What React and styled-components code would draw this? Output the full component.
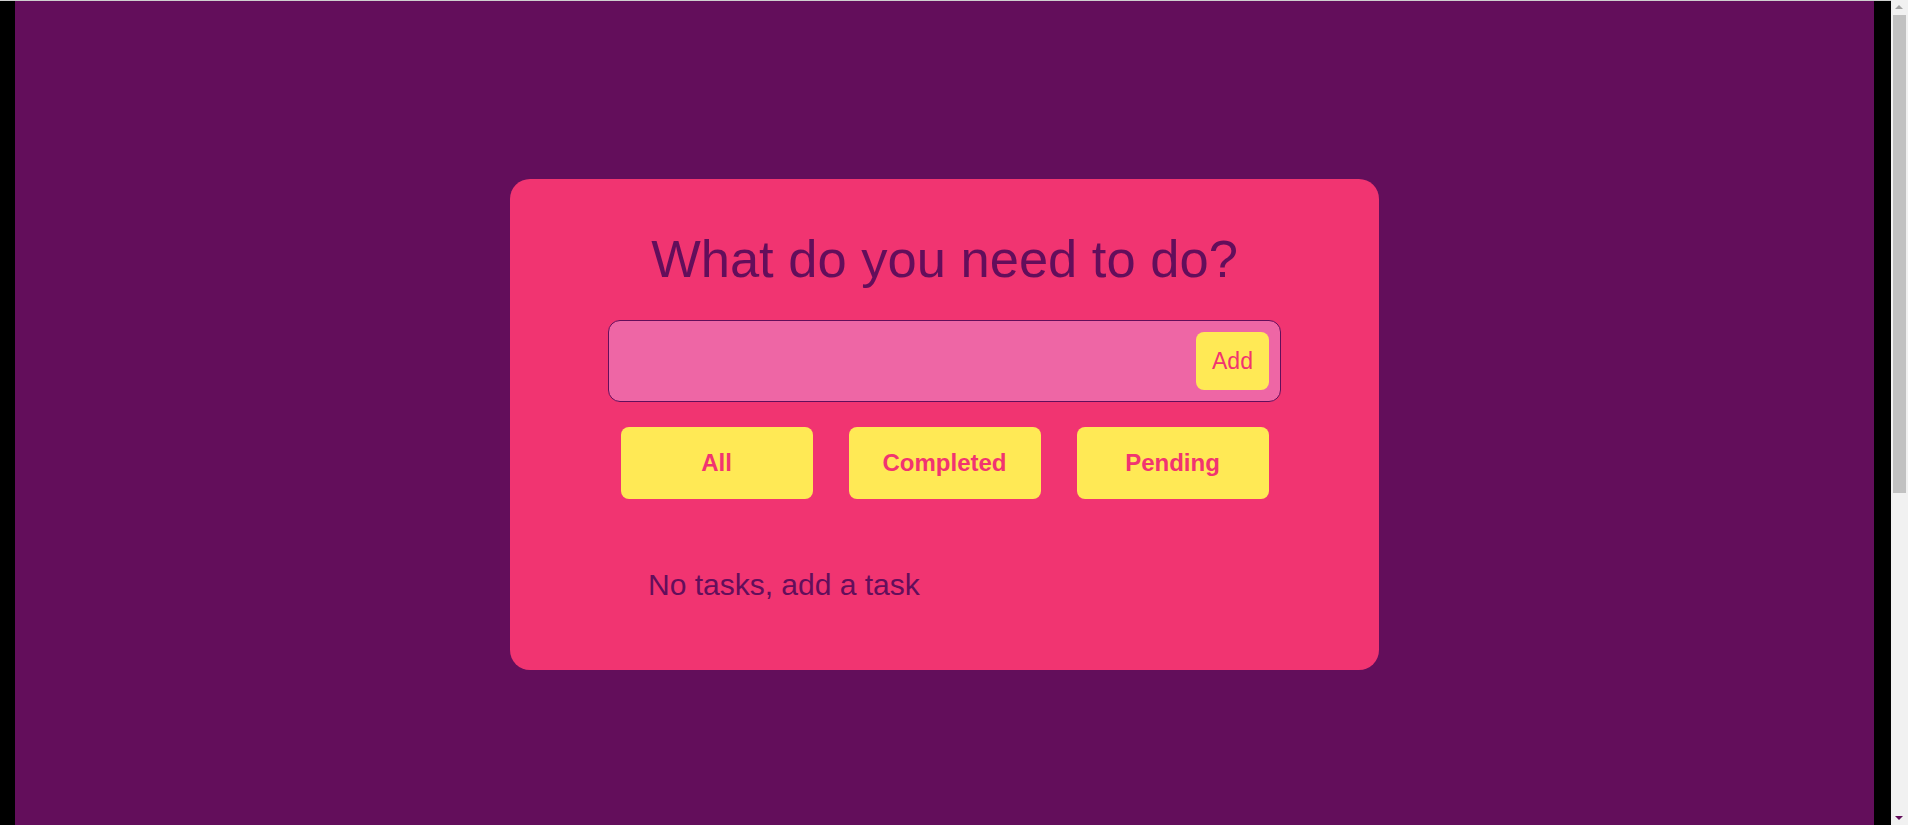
import { useState } from "react";
import styled, { createGlobalStyle } from "styled-components";

const PURPLE = "#630e5b";
const PINK = "#f13471";
const SOFT_PINK = "#ee66a5";
const YELLOW = "#ffe955";

const GlobalStyle = createGlobalStyle`
  html, body {
    margin: 0;
    padding: 0;
  }
  body {
    background: #000;
    border-top: 1px solid #cfcfcf;
    font-family: "Liberation Sans", Arial, sans-serif;
  }
`;

const Page = styled.main`
  min-height: 1371px;
  margin: 0 34px 0 15px;
  background: ${PURPLE};
  display: flex;
  flex-direction: column;
  align-items: center;
  padding-top: 178px;
  box-sizing: border-box;
`;

// stand-in for the window scrollbar seen in the screenshot
const ScrollTrack = styled.div`
  position: fixed;
  top: 0;
  right: 0;
  width: 17px;
  height: 100vh;
  background: #f1f1f1;
`;

const ScrollThumb = styled.div`
  position: absolute;
  top: 15px;
  left: 2px;
  width: 13px;
  height: 478px;
  background: #c1c1c1;
`;

const ScrollArrow = styled.div`
  position: absolute;
  left: 4px;
  width: 0;
  height: 0;
  border-left: 4px solid transparent;
  border-right: 4px solid transparent;
  ${({ $down }) =>
    $down
      ? `bottom: 5px; border-top: 4px solid ${PURPLE};`
      : `top: 5px; border-bottom: 4px solid #a3a3a3;`}
`;

const Card = styled.section`
  width: 869px;
  box-sizing: border-box;
  padding: 50px 98px 68px;
  background: ${PINK};
  border-radius: 20px;
`;

const Title = styled.h1`
  margin: 0;
  font-size: 52.5px;
  line-height: 60px;
  font-weight: 400;
  text-align: center;
  color: ${PURPLE};
`;

const InputBox = styled.form`
  margin-top: 31px;
  height: 82px;
  box-sizing: border-box;
  padding: 11px;
  display: flex;
  align-items: center;
  gap: 11px;
  background: ${SOFT_PINK};
  border: 1px solid ${PURPLE};
  border-radius: 12px;
`;

const TaskInput = styled.input`
  flex: 1;
  height: 100%;
  border: none;
  outline: none;
  background: transparent;
  font-family: inherit;
  font-size: 24px;
  color: ${PURPLE};
`;

const AddButton = styled.button`
  width: 73px;
  height: 58px;
  border: none;
  border-radius: 8px;
  background: ${YELLOW};
  color: ${PINK};
  font-family: inherit;
  font-size: 23px;
  cursor: pointer;
`;

const Filters = styled.div`
  margin-top: 25px;
  display: flex;
  justify-content: center;
  gap: 36px;
`;

const FilterButton = styled.button`
  width: 192px;
  height: 72px;
  border: none;
  border-radius: 8px;
  background: ${YELLOW};
  color: ${PINK};
  font-family: inherit;
  font-size: 24px;
  font-weight: 700;
  cursor: pointer;
`;

const TaskList = styled.ul`
  margin: 69px 0 0;
  padding-left: 40px;
  list-style: none;
`;

const Empty = styled.li`
  font-size: 30px;
  color: ${PURPLE};
`;

export default function App() {
  const [text, setText] = useState("");
  const [filter, setFilter] = useState("all");

  return (
    <>
      <GlobalStyle />
      <Page>
        <Card>
          <Title>What do you need to do?</Title>
          <InputBox onSubmit={(e) => e.preventDefault()}>
            <TaskInput value={text} onChange={(e) => setText(e.target.value)} />
            <AddButton type="submit">Add</AddButton>
          </InputBox>
          <Filters>
            {["All", "Completed", "Pending"].map((f) => (
              <FilterButton
                key={f}
                aria-pressed={filter === f.toLowerCase()}
                onClick={() => setFilter(f.toLowerCase())}
              >
                {f}
              </FilterButton>
            ))}
          </Filters>
          <TaskList>
            <Empty>No tasks, add a task</Empty>
          </TaskList>
        </Card>
      </Page>
      <ScrollTrack>
        <ScrollArrow />
        <ScrollThumb />
        <ScrollArrow $down />
      </ScrollTrack>
    </>
  );
}
